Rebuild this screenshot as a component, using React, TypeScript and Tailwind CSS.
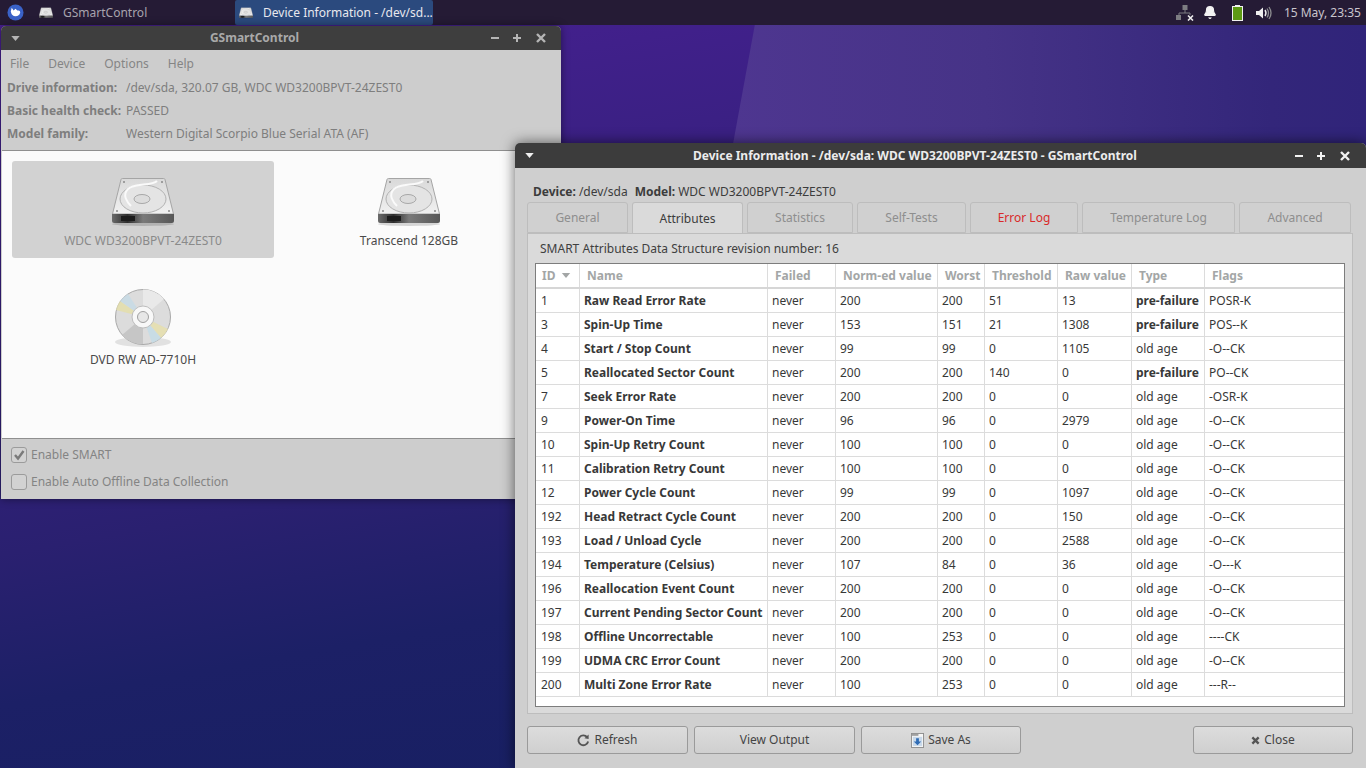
import React from "react";
import { Bell } from "lucide-react";

const rows: [string, string, string, string, string, string, string, string, string][] = [
  ["1", "Raw Read Error Rate", "never", "200", "200", "51", "13", "pre-failure", "POSR-K"],
  ["3", "Spin-Up Time", "never", "153", "151", "21", "1308", "pre-failure", "POS--K"],
  ["4", "Start / Stop Count", "never", "99", "99", "0", "1105", "old age", "-O--CK"],
  ["5", "Reallocated Sector Count", "never", "200", "200", "140", "0", "pre-failure", "PO--CK"],
  ["7", "Seek Error Rate", "never", "200", "200", "0", "0", "old age", "-OSR-K"],
  ["9", "Power-On Time", "never", "96", "96", "0", "2979", "old age", "-O--CK"],
  ["10", "Spin-Up Retry Count", "never", "100", "100", "0", "0", "old age", "-O--CK"],
  ["11", "Calibration Retry Count", "never", "100", "100", "0", "0", "old age", "-O--CK"],
  ["12", "Power Cycle Count", "never", "99", "99", "0", "1097", "old age", "-O--CK"],
  ["192", "Head Retract Cycle Count", "never", "200", "200", "0", "150", "old age", "-O--CK"],
  ["193", "Load / Unload Cycle", "never", "200", "200", "0", "2588", "old age", "-O--CK"],
  ["194", "Temperature (Celsius)", "never", "107", "84", "0", "36", "old age", "-O---K"],
  ["196", "Reallocation Event Count", "never", "200", "200", "0", "0", "old age", "-O--CK"],
  ["197", "Current Pending Sector Count", "never", "200", "200", "0", "0", "old age", "-O--CK"],
  ["198", "Offline Uncorrectable", "never", "100", "253", "0", "0", "old age", "----CK"],
  ["199", "UDMA CRC Error Count", "never", "200", "200", "0", "0", "old age", "-O--CK"],
  ["200", "Multi Zone Error Rate", "never", "100", "253", "0", "0", "old age", "---R--"],
];

const cols = "grid grid-cols-[44px_188px_68px_102px_47px_73px_74px_73px_1fr]";

function Drive({ className = "" }: { className?: string }) {
  return (
    <svg viewBox="0 0 62 48" className={className}>
      <defs>
        <linearGradient id="dt" x1="0" y1="0" x2="0" y2="1">
          <stop offset="0" stopColor="#d9d9d9" />
          <stop offset="1" stopColor="#f1f1f1" />
        </linearGradient>
        <linearGradient id="db" x1="0" y1="0" x2="1" y2="0">
          <stop offset="0" stopColor="#6b6b6b" />
          <stop offset="0.25" stopColor="#2d2d2d" />
          <stop offset="0.5" stopColor="#7a7a7a" />
          <stop offset="1" stopColor="#575757" />
        </linearGradient>
      </defs>
      <ellipse cx="31" cy="46" rx="31" ry="2" fill="#000" opacity="0.15" />
      <path d="M0.5 36 L9 1.5 Q9.3 0.5 10.5 0.5 L51.5 0.5 Q52.7 0.5 53 1.5 L61.5 36 Z" fill="url(#dt)" stroke="#a5a5a5" />
      <path d="M0 36 H62 V43 Q62 45 60 45 H2 Q0 45 0 43 Z" fill="url(#db)" />
      <rect x="9" y="38" width="14" height="5" fill="#1c1c1c" />
      <ellipse cx="31" cy="21" rx="23" ry="14" fill="#e4e4e4" stroke="#b2b2b2" />
      <ellipse cx="30" cy="21" rx="8" ry="4.5" fill="#dcdcdc" stroke="#a8a8a8" />
      <path d="M45 3 C40 8 22 5 16 11 C10 17 15 24 19 28" fill="none" stroke="#fafafa" strokeWidth="2" />
      <circle cx="12" cy="4" r="1" fill="#8a8a8a" />
      <circle cx="50" cy="4" r="1" fill="#8a8a8a" />
      <circle cx="5" cy="33" r="1" fill="#8a8a8a" />
      <circle cx="57" cy="33" r="1" fill="#8a8a8a" />
    </svg>
  );
}

function Disc({ className = "" }: { className?: string }) {
  return (
    <svg viewBox="0 0 58 60" className={className}>
      <ellipse cx="29" cy="54" rx="28" ry="5" fill="#000" opacity="0.1" />
      <circle cx="29" cy="29" r="27.5" fill="#dcdcdc" stroke="#a9a9a9" />
      <path d="M29 29 L2 22 A28 28 0 0 1 6 13 Z" fill="#e5dfa8" opacity="0.8" />
      <path d="M29 29 L6 13 A28 28 0 0 1 14 6 Z" fill="#c5dbe6" opacity="0.8" />
      <path d="M29 29 L54 41 A28 28 0 0 1 47 50 Z" fill="#e6dfaf" opacity="0.9" />
      <path d="M29 29 L47 50 A28 28 0 0 1 38 55 Z" fill="#c5dbe6" opacity="0.9" />
      <path d="M29 29 L29 1.5 A28 28 0 0 1 50 11 Z" fill="#e9e9e9" />
      <path d="M29 29 L8 47 A28 28 0 0 0 29 56 Z" fill="#c6c6c6" />
      <circle cx="29" cy="29" r="11" fill="#f8f8f8" stroke="#bdbdbd" />
      <circle cx="29" cy="29" r="5.5" fill="#e7e7e7" stroke="#a0a0a0" />
    </svg>
  );
}

function WinButtons({ color, className = "" }: { color: string; className?: string }) {
  return (
    <svg viewBox="0 0 62 12" className={`w-[62px] h-3 ${className}`} fill="none" stroke={color} strokeWidth="2">
      <path d="M1 6 H9" />
      <path d="M23 6 H31 M27 2 V10" />
      <path d="M47 2 L55 10 M55 2 L47 10" strokeWidth="2.4" />
    </svg>
  );
}

function MenuArrow({ color }: { color: string }) {
  return (
    <svg viewBox="0 0 10 6" className="w-[9px] h-[5px]">
      <path d="M0 0 H10 L5 6 Z" fill={color} />
    </svg>
  );
}

function Tab({ label, w, active, red }: { label: string; w: string; active?: boolean; red?: boolean }) {
  return (
    <div
      className={`${w} flex items-center justify-center rounded-t-[3px] border border-[#bdbdbd] ${
        active
          ? "h-[32px] -mb-px bg-[#dadada] border-b-0 text-[#3c3c3c]"
          : red
          ? "h-[31px] bg-[#d0d0d0] text-[#d92a2a]"
          : "h-[31px] bg-[#d0d0d0] text-[#8e8e8e]"
      }`}
    >
      {label}
    </div>
  );
}

function Btn({ w, children }: { w: string; children: React.ReactNode }) {
  return (
    <div className={`${w} h-[28px] flex items-center justify-center gap-1 rounded-[3px] border border-[#9a9a9a] bg-gradient-to-b from-[#dcdcdc] to-[#cfcfcf] text-[#444]`}>
      {children}
    </div>
  );
}

export default function App() {
  return (
    <div className="relative w-[1366px] h-[768px] overflow-hidden bg-[linear-gradient(170deg,#4a1f92_0%,#40208a_15%,#2a2070_55%,#1c2066_70%,#151f60_100%)] font-['Noto_Sans',sans-serif] text-[12px] leading-4">
      {/* wallpaper shard */}
      <div className="absolute left-[733px] top-6 w-[633px] h-[300px] [clip-path:polygon(22px_0,100%_0,100%_100%,0_100%,0_120px)] bg-[linear-gradient(90deg,#4e3690_0%,#463387_40%,#33267a_85%,#30247a_100%)]" />

      {/* top panel */}
      <div className="absolute inset-x-0 top-0 h-[25px] bg-[#251b35] flex items-stretch text-[#a8a3ad]">
        <div className="w-[30px] flex items-center justify-center pl-[-4px] mr-[2px]">
          <svg viewBox="0 0 18 18" className="w-[17px] h-[17px]">
            <circle cx="9" cy="9" r="8.5" fill="#3a62c8" />
            <path d="M4 8 L5 4 L7 7 L9 5 L11 7 Q14 6 14 9 Q13 13 9 13 Q5 13 4 8 Z" fill="#fff" />
          </svg>
        </div>
        <div className="w-[203px] flex items-center pl-[7px] gap-[10px]">
          <Drive className="w-[14px] h-[14px]" />
          <span>GSmartControl</span>
        </div>
        <div className="w-[198px] flex items-center pl-[4px] gap-[10px] bg-[#2b4a7e] rounded-[2px] text-[#e8e8ee]">
          <Drive className="w-[14px] h-[14px]" />
          <span>Device Information - /dev/sd...</span>
        </div>
        <div className="ml-auto flex items-center pr-[5px]">
          <svg viewBox="0 0 18 16" className="w-[18px] h-[16px] mr-[9px]">
            <rect x="6.5" y="0" width="5" height="5" fill="#7d7d82" />
            <rect x="0" y="10" width="5" height="5" fill="#7d7d82" />
            <path d="M9 5 V8 M3 10 V8 H14 V10" stroke="#7d7d82" fill="none" />
            <path d="M12 10.5 L17 15.5 M17 10.5 L12 15.5" stroke="#eee" strokeWidth="1.6" />
          </svg>
          <Bell className="w-[14px] h-[15px] mr-[15px]" fill="#f3f3f3" stroke="#f3f3f3" />
          <svg viewBox="0 0 11 16" className="w-[11px] h-[16px] mr-[13px]">
            <rect x="3" y="0" width="5" height="2" fill="#f0f0f0" />
            <rect x="0.5" y="1.5" width="10" height="14" fill="#5d9a14" stroke="#f0f0f0" />
          </svg>
          <svg viewBox="0 0 16 14" className="w-[16px] h-[14px] mr-[12px]">
            <path d="M0 5 H3 L7 1.5 V12.5 L3 9 H0 Z" fill="#efefef" />
            <path d="M9 4 Q11 7 9 10" stroke="#efefef" strokeWidth="1.4" fill="none" />
            <path d="M11 2.5 Q14 7 11 11.5" stroke="#8c8c8f" strokeWidth="1.3" fill="none" />
            <path d="M13 1 Q17 7 13 13" stroke="#8c8c8f" strokeWidth="1.3" fill="none" />
          </svg>
          <span className="text-[#c9c5cd]">15 May, 23:35</span>
        </div>
      </div>

      {/* main window */}
      <div className="absolute left-px top-[26px] w-[560px] h-[473px] rounded-t-[5px] overflow-hidden flex flex-col bg-[#cdcdcd] text-[#7e7e7e] shadow-[0_0_8px_rgba(0,0,0,0.45)]">
        <div className="h-[24px] shrink-0 bg-[#3e3e3e] flex items-center px-[10px]">
          <MenuArrow color="#b5b5b5" />
          <span className="flex-1 text-center font-bold text-[#a9a9a9] pr-[1px]">GSmartControl</span>
          <WinButtons color="#b5b5b5" className="-mr-[1px]" />
        </div>
        <div className="h-[24px] mt-[2px] shrink-0 flex items-center gap-[19px] pl-[9px] text-[#858585]">
          <span>File</span>
          <span>Device</span>
          <span>Options</span>
          <span>Help</span>
        </div>
        <div className="flex flex-col gap-[7px] pl-[6px] pt-[4px] h-[74px] shrink-0">
          <div className="flex"><b className="w-[119px]">Drive information:</b><span>/dev/sda, 320.07 GB, WDC WD3200BPVT-24ZEST0</span></div>
          <div className="flex"><b className="w-[119px]">Basic health check:</b><span>PASSED</span></div>
          <div className="flex"><b className="w-[119px]">Model family:</b><span>Western Digital Scorpio Blue Serial ATA (AF)</span></div>
        </div>
        <div className="h-[289px] shrink-0 mx-px bg-[#fbfbfb] border-y border-[#8f8f8f] p-[10px] pl-[10px] grid grid-cols-[262px_262px] grid-rows-[97px_1fr] gap-x-1 content-start">
          <div className="flex flex-col items-center pt-[17px] gap-[7px] rounded-[3px] bg-[#d2d2d2] text-[#8a8a8a]">
            <Drive className="w-[62px] h-[48px]" />
            <span>WDC WD3200BPVT-24ZEST0</span>
          </div>
          <div className="flex flex-col items-center pt-[17px] gap-[7px] text-[#4a4a4a]">
            <Drive className="w-[62px] h-[48px]" />
            <span>Transcend 128GB</span>
          </div>
          <div className="flex flex-col items-center pt-[30px] gap-[4px] text-[#4a4a4a]">
            <Disc className="w-[58px] h-[60px]" />
            <span>DVD RW AD-7710H</span>
          </div>
        </div>
        <div className="flex-1 flex flex-col gap-[11px] pl-[10px] pt-[8px] text-[#848484]">
          <div className="flex items-center gap-[4px]">
            <span className="w-4 h-4 rounded-[3px] border border-[#9b9b9b] bg-[#d2d2d2] flex items-center justify-center">
              <svg viewBox="0 0 12 12" className="w-3 h-3"><path d="M2 6 L5 9.5 L10.5 2" fill="none" stroke="#7a7a7a" strokeWidth="2.4" /></svg>
            </span>
            <span>Enable SMART</span>
          </div>
          <div className="flex items-center gap-[4px]">
            <span className="w-4 h-4 rounded-[3px] border border-[#9b9b9b] bg-[#d2d2d2]" />
            <span>Enable Auto Offline Data Collection</span>
          </div>
        </div>
      </div>

      {/* dialog */}
      <div className="absolute left-[515px] top-[143px] w-[851px] h-[625px] rounded-t-[5px] overflow-hidden flex flex-col bg-[#cfcfcf] text-[#3c3c3c] shadow-[0_0_14px_rgba(0,0,0,0.6)]">
        <div className="h-[25px] shrink-0 bg-[#3c3c3c] flex items-center pl-[10px] pr-[10px]">
          <MenuArrow color="#f0f0f0" />
          <span className="flex-1 text-center font-bold text-[#ececec] pl-[2px]">Device Information - /dev/sda: WDC WD3200BPVT-24ZEST0 - GSmartControl</span>
          <WinButtons color="#f2f2f2" />
        </div>
        <div className="h-[34px] shrink-0 flex items-center pl-[18px] pt-[13px]">
          <b>Device:</b><span className="ml-[3px]">/dev/sda</span>
          <b className="ml-[7px]">Model:</b><span className="ml-[3px]">WDC WD3200BPVT-24ZEST0</span>
        </div>
        <div className="ml-[12px] mr-[13px] shrink-0 flex items-end gap-[4px]">
          <Tab label="General" w="w-[101px]" />
          <Tab label="Attributes" w="w-[111px]" active />
          <Tab label="Statistics" w="w-[106px]" />
          <Tab label="Self-Tests" w="w-[109px]" />
          <Tab label="Error Log" w="w-[108px]" red />
          <Tab label="Temperature Log" w="w-[153px]" />
          <Tab label="Advanced" w="w-[112px]" />
        </div>
        <div className="ml-[12px] mr-[13px] h-[481px] shrink-0 bg-[#dadada] border border-[#bdbdbd] flex flex-col">
          <div className="h-[29px] shrink-0 flex items-center pl-[12px] pt-[1px] text-[#404040]">SMART Attributes Data Structure revision number: 16</div>
          <div className="mx-[7px] h-[444px] shrink-0 bg-white border border-[#7d7d7d]">
            <div className={`${cols} h-[25px] border-b-2 border-[#d6d6d6] font-bold text-[#a3a6a6]`}>
              <div className="pl-[6px] flex items-center gap-[6px] border-r border-[#dcdcdc]">
                ID
                <svg viewBox="0 0 10 6" className="w-[10px] h-[5px]"><path d="M0 0 H10 L5 6 Z" fill="#a3a6a6" /></svg>
              </div>
              {["Name", "Failed", "Norm-ed value", "Worst", "Threshold", "Raw value", "Type", "Flags"].map((h) => (
                <div key={h} className="pl-[7px] flex items-center border-r border-[#dcdcdc] last:border-r-0">{h}</div>
              ))}
            </div>
            {rows.map((r) => (
              <div key={r[0]} className={`${cols} h-[24px] border-b border-[#dcdcdc] text-[#383838]`}>
                {r.map((c, i) => (
                  <div
                    key={i}
                    className={`flex items-center whitespace-nowrap border-r border-[#dcdcdc] last:border-r-0 ${i === 0 ? "pl-[5px]" : "pl-[4px]"} ${
                      i === 1 || c === "pre-failure" ? "font-bold" : ""
                    }`}
                  >
                    {c}
                  </div>
                ))}
              </div>
            ))}
          </div>
        </div>
        <div className="mt-[12px] ml-[12px] mr-[13px] flex gap-[6px]">
          <Btn w="w-[161px]">
            <svg viewBox="0 0 14 14" className="w-[13px] h-[13px]">
              <path d="M11 3.5 A5.3 5.3 0 1 0 12 8" fill="none" stroke="#555" strokeWidth="2" />
              <path d="M8 4.5 L12.5 5.5 L12.5 0.5 Z" fill="#555" />
            </svg>
            Refresh
          </Btn>
          <Btn w="w-[161px]">View Output</Btn>
          <Btn w="w-[160px]">
            <svg viewBox="0 0 14 16" className="w-[13px] h-[15px]">
              <rect x="0.5" y="0.5" width="13" height="15" fill="#f6f6f6" stroke="#8d8d8d" />
              <rect x="1" y="1" width="7" height="2" fill="#a0a0a0" />
              <rect x="2" y="4" width="10" height="10" fill="#c9d9ea" />
              <path d="M5.5 5.5 H8.5 V9 H11 L7 13 L3 9 H5.5 Z" fill="#2f6cb5" />
            </svg>
            Save As
          </Btn>
          <div className="ml-auto">
            <Btn w="w-[160px]">
              <svg viewBox="0 0 10 10" className="w-[9px] h-[9px]"><path d="M1.5 1.5 L8.5 8.5 M8.5 1.5 L1.5 8.5" stroke="#555" strokeWidth="2.6" /></svg>
              Close
            </Btn>
          </div>
        </div>
      </div>
    </div>
  );
}
